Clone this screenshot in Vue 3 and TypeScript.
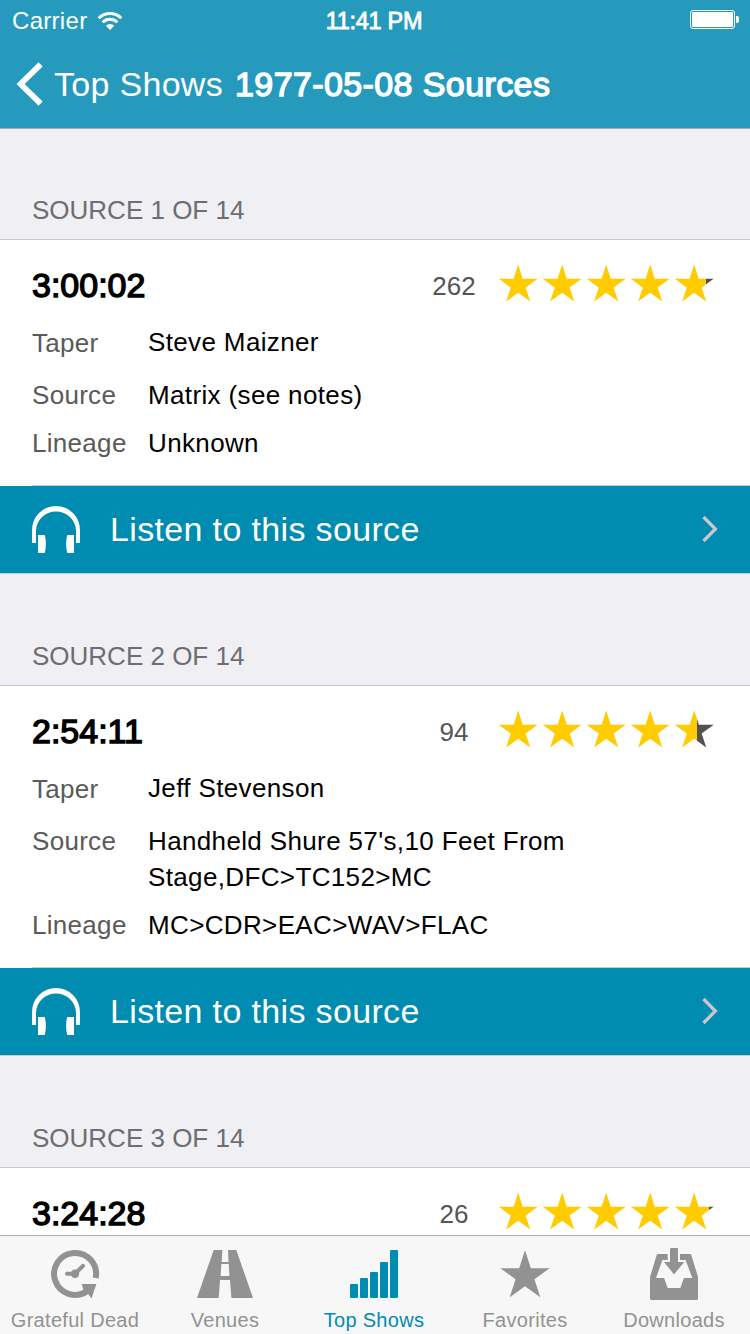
<script setup lang="ts">
interface Field {
  label: string
  lines: string[]
}

interface Source {
  id: number
  duration: string
  reviews: number
  rating: number
  fields: Field[]
}

const total = 14
const starPitch = 44

const sources: Source[] = [
  {
    id: 1,
    duration: '3:00:02',
    reviews: 262,
    rating: 4.7,
    fields: [
      { label: 'Taper', lines: ['Steve Maizner'] },
      { label: 'Source', lines: ['Matrix (see notes)'] },
      { label: 'Lineage', lines: ['Unknown'] },
    ],
  },
  {
    id: 2,
    duration: '2:54:11',
    reviews: 94,
    rating: 4.5,
    fields: [
      { label: 'Taper', lines: ['Jeff Stevenson'] },
      { label: 'Source', lines: ["Handheld Shure 57's,10 Feet From", 'Stage,DFC>TC152>MC'] },
      { label: 'Lineage', lines: ['MC>CDR>EAC>WAV>FLAC'] },
    ],
  },
  {
    id: 3,
    duration: '3:24:28',
    reviews: 26,
    rating: 4.77,
    fields: [],
  },
]

const starPoints = (cx: number, cy: number, r: number): string =>
  Array.from({ length: 10 }, (_, i) => {
    const radius = i % 2 === 0 ? r : r * 0.382
    const angle = (Math.PI / 5) * i - Math.PI / 2
    return `${(cx + radius * Math.cos(angle)).toFixed(2)},${(cy + radius * Math.sin(angle)).toFixed(2)}`
  }).join(' ')

const stars = [0, 1, 2, 3, 4].map((i) => starPoints(19.2 + i * starPitch, 21, 20.5))
const favoriteStar = starPoints(28, 28.2, 26)
</script>

<template>
  <div class="screen">
    <header class="nav">
      <div class="status">
        <div class="carrier">
          <span>Carrier</span>
          <svg class="wifi" width="26" height="20" viewBox="0 0 26 20">
            <path d="M1.7 7.2 A16 16 0 0 1 24.3 7.2" fill="none" stroke="#fff" stroke-width="3" />
            <path d="M5.6 11.2 A10.5 10.5 0 0 1 20.4 11.2" fill="none" stroke="#fff" stroke-width="3" />
            <path d="M13 19 L8.8 14.8 A6 6 0 0 1 17.2 14.8 Z" fill="#fff" />
          </svg>
        </div>
        <div class="clock">11:41 PM</div>
        <svg class="battery" width="50" height="20" viewBox="0 0 50 20">
          <rect x="0.5" y="0.5" width="44" height="18" rx="2.5" fill="none" stroke="#fff" />
          <rect x="2" y="2" width="41" height="15" rx="1.2" fill="#fff" />
          <path d="M46 6 h1 a2 2 0 0 1 2 2 v3 a2 2 0 0 1 -2 2 h-1 Z" fill="#fff" />
        </svg>
      </div>
      <div class="title-row">
        <svg class="back" width="28" height="44" viewBox="0 0 28 44">
          <path d="M24.6 2.4 L4.6 22 L24.6 41.6" fill="none" stroke="#fff" stroke-width="5.8" />
        </svg>
        <span class="back-label">Top Shows</span>
        <span class="title">1977-05-08 Sources</span>
      </div>
    </header>

    <main class="content">
      <section v-for="s in sources" :key="s.id" class="section">
        <h2 class="section-head">SOURCE {{ s.id }} OF {{ total }}</h2>
        <div class="card">
          <div class="summary">
            <span class="duration">{{ s.duration }}</span>
            <span class="reviews">{{ s.reviews }}</span>
            <svg class="stars" width="218" height="42" viewBox="0 0 218 42">
              <defs>
                <clipPath :id="`rating-${s.id}`">
                  <rect x="0" y="0" :width="s.rating * starPitch" height="42" />
                </clipPath>
                <clipPath :id="`rest-${s.id}`">
                  <rect :x="s.rating * starPitch" y="0" width="44" height="42" />
                </clipPath>
              </defs>
              <polygon :points="stars[4]" fill="#505055" :clip-path="`url(#rest-${s.id})`" />
              <g :clip-path="`url(#rating-${s.id})`" fill="#ffcc00">
                <polygon v-for="(p, i) in stars" :key="i" :points="p" />
              </g>
            </svg>
          </div>
          <div v-for="f in s.fields" :key="f.label" class="field">
            <span class="label">{{ f.label }}</span>
            <div class="value">
              <div v-for="line in f.lines" :key="line">{{ line }}</div>
            </div>
          </div>
        </div>
        <template v-if="s.fields.length">
          <div class="separator"></div>
          <div class="listen">
            <svg class="headphones" width="48" height="48" viewBox="0 0 48 48" fill="#fff">
              <path d="M0 37 V24 A24 24 0 0 1 48 24 V37 H44 V25 A20 19.4 0 0 0 4 25 V37 Z" />
              <path d="M6 29 H12.8 Q15 38 12.8 47 H6 Z" />
              <path d="M42 29 H35.2 Q33 38 35.2 47 H42 Z" />
            </svg>
            <span class="listen-label">Listen to this source</span>
            <svg class="chevron" width="18" height="28" viewBox="0 0 18 28">
              <path d="M2.5 2 L14.4 14 L2.5 26" fill="none" stroke="#c7c7cc" stroke-width="3.3" />
            </svg>
          </div>
        </template>
      </section>
    </main>

    <nav class="tabs">
      <div class="tab">
        <svg width="56" height="54" viewBox="0 0 56 54" fill="currentColor">
          <path d="M48.7 30 A21 21 0 1 0 40 43.2" fill="none" stroke="currentColor" stroke-width="6" />
          <path d="M34.7 36 H49.4 L44.4 50.4 L41.6 46.5 L36.5 42 Z" />
          <circle cx="28" cy="25.7" r="4.2" />
          <path d="M20 25.8 H28 L36 17.9" fill="none" stroke="currentColor" stroke-width="4" stroke-linecap="round" />
        </svg>
        <span>Grateful Dead</span>
      </div>
      <div class="tab">
        <svg width="56" height="54" viewBox="0 0 56 54">
          <path d="M16.7 2 H39.3 L56 50 H0 Z" fill="currentColor" />
          <path d="M25.4 2 H31 L31.5 14 H24.7 Z M24.4 16 H31.7 L32.4 28 H23.6 Z M23 32 H33 L34.4 50 H21.7 Z" fill="#f7f7f7" />
        </svg>
        <span>Venues</span>
      </div>
      <div class="tab active">
        <svg width="56" height="54" viewBox="0 0 56 54" fill="currentColor">
          <rect x="4" y="36" width="8" height="14" rx="1" />
          <rect x="14" y="30" width="8" height="20" rx="1" />
          <rect x="24" y="24" width="8" height="26" rx="1" />
          <rect x="34" y="14" width="8" height="36" rx="1" />
          <rect x="44" y="2" width="8" height="48" rx="1" />
        </svg>
        <span>Top Shows</span>
      </div>
      <div class="tab">
        <svg width="56" height="54" viewBox="0 0 56 54" fill="currentColor">
          <polygon :points="favoriteStar" />
        </svg>
        <span>Favorites</span>
      </div>
      <div class="tab downloads">
        <svg width="56" height="54" viewBox="0 0 56 54" fill="currentColor">
          <path d="M4 29 L10.7 7 Q11 6 12 6 H21.7 V12 H16.4 L10 30 H18 L21.7 40 H34.3 L38 30 H46.3 L39.6 12 H34 V6 H44 Q45 6 45.3 7 L52 29 V50.5 Q52 52 50.5 52 H5.5 Q4 52 4 50.5 Z" />
          <path d="M24 1 Q24 0 25 0 H31 Q32 0 32 1 V14 H38.3 L28 26.4 L18 14 H24 Z" />
        </svg>
        <span>Downloads</span>
      </div>
    </nav>
  </div>
</template>

<style>
body {
  margin: 0;
}
</style>

<style scoped>
.screen {
  width: 750px;
  height: 1334px;
  display: flex;
  flex-direction: column;
  overflow: hidden;
  background: #efeff4;
  font-family: "Liberation Sans", Arial, sans-serif;
  color: #000;
  white-space: nowrap;
}
svg {
  display: block;
  flex: none;
}
.nav {
  height: 128px;
  flex: none;
  background: #269abc;
  border-bottom: 1px solid #a3a9ad;
  color: #fff;
}
.status {
  height: 40px;
  display: grid;
  grid-template-columns: 1fr auto 1fr;
  align-items: center;
  font-size: 24px;
  line-height: 28px;
}
.carrier {
  display: flex;
  align-items: center;
  gap: 10px;
  padding: 1px 0 0 12px;
  letter-spacing: 0.3px;
}
.clock {
  margin-left: -2px;
  padding-top: 1px;
  font-size: 23.5px;
  letter-spacing: -0.3px;
  -webkit-text-stroke: 0.8px #fff;
}
.battery {
  justify-self: end;
  margin-right: 10px;
}
.title-row {
  display: flex;
  align-items: center;
  height: 88px;
  padding-left: 16px;
  font-size: 34px;
  line-height: 40px;
}
.back-label {
  margin-left: 10px;
  letter-spacing: 0.3px;
}
.title {
  margin-left: 12px;
  letter-spacing: 0.4px;
  -webkit-text-stroke: 1.4px #fff;
}
.content {
  flex: 1;
  min-height: 0;
  overflow: hidden;
}
.section-head {
  box-sizing: border-box;
  height: 112px;
  margin: 0;
  padding: 67px 0 0 32px;
  border-bottom: 1px solid #c8c7cc;
  font-size: 26px;
  font-weight: 400;
  line-height: 30px;
  color: #6d6d72;
}
.section:first-child .section-head {
  height: 111px;
  padding-top: 66px;
}
.card {
  padding: 25px 0 24px;
  background: #fff;
}
.summary {
  display: flex;
  height: 40px;
  line-height: 40px;
  margin-bottom: 19px;
}
.duration {
  width: 377px;
  padding-left: 32px;
  font-size: 34px;
  -webkit-text-stroke: 1.4px #000;
}
.reviews {
  width: 90px;
  padding-top: 1px;
  font-size: 26px;
  text-align: center;
  color: #555;
}
.stars {
  margin-top: -1px;
}
.field {
  display: flex;
  font-size: 26px;
  line-height: 36px;
  letter-spacing: 0.36px;
}
.field:nth-child(2) {
  margin-bottom: 17px;
}
.field:nth-child(3) {
  margin-bottom: 12px;
}
.label {
  width: 116px;
  padding-left: 32px;
  letter-spacing: 0.3px;
  color: #5a5a5a;
}
.field:nth-child(2) .label {
  padding-top: 1px;
  margin-bottom: -1px;
}
.separator {
  height: 1px;
  background: linear-gradient(to right, #fff 32px, #c8c7cc 32px);
}
.listen {
  box-sizing: border-box;
  height: 88px;
  display: flex;
  align-items: center;
  padding: 0 31px 0 32px;
  background: #008bb1;
  border-bottom: 1px solid #c8c7cc;
  color: #fff;
  font-size: 34px;
  line-height: 40px;
}
.listen-label {
  flex: 1;
  margin-left: 30px;
  padding-bottom: 2px;
  letter-spacing: 0.35px;
}
.chevron {
  margin-bottom: 1px;
}
.tabs {
  box-sizing: border-box;
  height: 99px;
  flex: none;
  display: grid;
  grid-template-columns: repeat(5, 1fr);
  border-top: 1px solid #adadad;
  background: #f7f7f7;
  color: #929292;
}
.tab {
  display: flex;
  flex-direction: column;
  align-items: center;
  gap: 6px;
  padding-top: 12px;
  font-size: 20px;
  line-height: 24px;
  letter-spacing: 0.3px;
}
.active,
.downloads {
  padding-right: 2px;
}
.active {
  color: #008bb1;
}
</style>
